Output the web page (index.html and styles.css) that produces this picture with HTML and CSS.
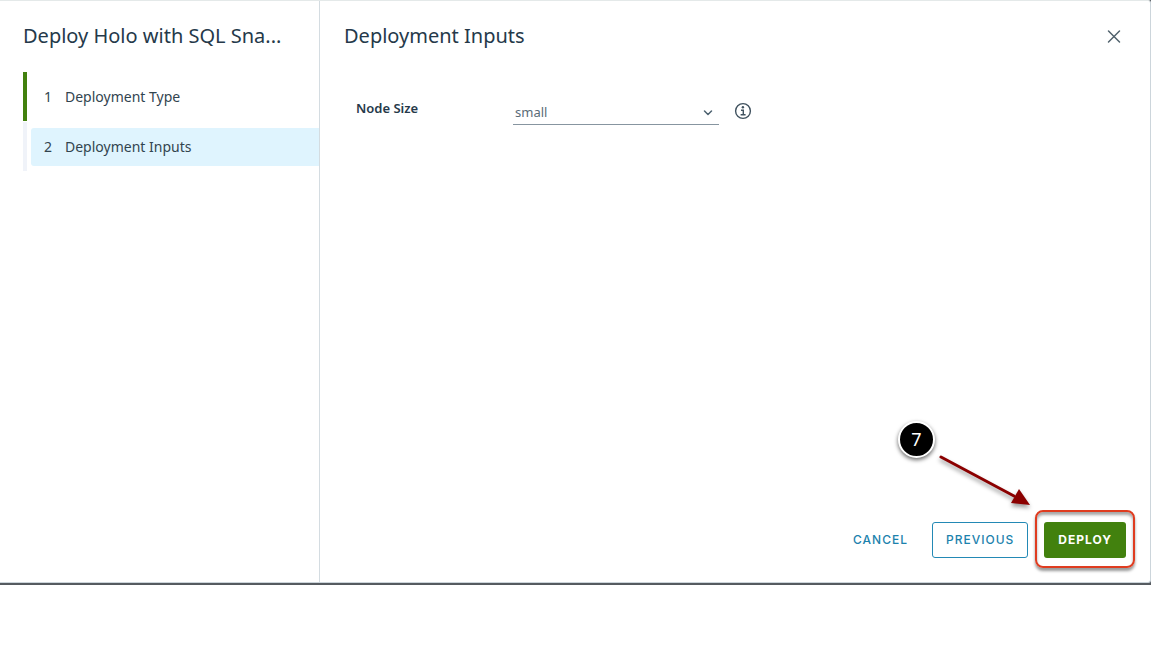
FILE: index.html
```html
<!DOCTYPE html>
<html lang="en">
<head>
<meta charset="utf-8">
<title>Deployment Inputs</title>
<meta name="viewport" content="width=device-width, initial-scale=1">
<link rel="stylesheet" href="styles.css">
</head>
<body>
<div class="backdrop">
  <div class="wizard" role="dialog" aria-labelledby="page-title">
    <aside class="sidebar">
      <h1 class="title">Deploy Holo with SQL Sna...</h1>
      <nav aria-label="Steps">
        <ol class="steps">
          <li class="step step-done"><button class="step-link" type="button"><span class="step-number">1</span>Deployment Type</button></li>
          <li class="step"><button class="step-link step-current" type="button" aria-current="step"><span class="step-number">2</span>Deployment Inputs</button></li>
        </ol>
      </nav>
    </aside>
    <main class="page">
      <header class="page-header">
        <h2 class="title" id="page-title">Deployment Inputs</h2>
        <button class="icon-button" type="button" aria-label="Close">
          <svg width="16" height="16" viewBox="0 0 16 16" fill="none" stroke="#51626d" stroke-width="1.5" stroke-linecap="round"><path d="M2.5 3l11 11M13.500 3l-11 11"/></svg>
        </button>
      </header>
      <form class="fields">
        <label class="field-label" for="node-size">Node Size</label>
        <div class="select-wrap">
          <select class="select" id="node-size"><option>small</option><option>medium</option><option>large</option></select>
          <svg class="caret" width="12" height="8" viewBox="0 0 12 8" fill="none" stroke="#4d6270" stroke-width="1.500" stroke-linecap="round" stroke-linejoin="round"><path d="M2.500 2L6 5.500 9.500 2"/></svg>
        </div>
        <button class="icon-button" type="button" aria-label="Node size information">
          <svg width="18" height="18" viewBox="0 0 18 18" fill="none" stroke="#40525f"><circle cx="9" cy="9" r="7.400" stroke-width="1.400"/><circle cx="8.900" cy="5.200" r="1.200" fill="#40525f" stroke="none"/><path d="M7 8.200h2.300v4.600M6.600 12.800h5" stroke-width="1.400"/></svg>
        </button>
      </form>
      <footer class="actions">
        <button class="button button-link" type="button">Cancel</button>
        <button class="button button-outline" type="button">Previous</button>
        <div class="highlight"><button class="button button-primary" type="button">Deploy</button></div>
        <div class="callout">7</div>
        <svg class="arrow" width="96" height="58" viewBox="0 0 96 58"><path d="M5 4L78 43" stroke="#8b0000" stroke-width="3" stroke-linecap="round"/><path d="M83 36L94 52 75 50Z" fill="#8b0000"/></svg>
      </footer>
    </main>
  </div>
</div>
</body>
</html>
```
FILE: styles.css
```css
* { box-sizing: border-box; }

body {
  margin: 0;
  background: #fff;
  color: #21333b;
  font-family: "Noto Sans", "Open Sans", sans-serif;
}

button, select { font: inherit; color: inherit; }
button { cursor: pointer; }
svg { display: block; }

.backdrop {
  margin-right: 14px;
  background: #565b60;
  padding-bottom: 2px;
}

.wizard {
  display: grid;
  grid-template-columns: 320px 1fr;
  min-height: calc(100vh - 63px);
  background: #fff;
  border: 1px solid #ccd5db;
  border-top-color: #e4e9e9;
  border-left: 0;
  border-radius: 0 3px 3px 0;
}

.sidebar {
  padding: 22px 0 0 23px;
  border-right: 1px solid #d4dce1;
}

.title {
  margin: 0;
  color: #25394a;
  font-size: 20px;
  line-height: 26px;
  font-weight: 400;
  white-space: nowrap;
}

.steps {
  display: grid;
  gap: 1px;
  margin: 23px 0 0;
  padding: 0;
  list-style: none;
}

.step {
  display: flex;
  align-items: center;
  height: 49px;
  padding-left: 4px;
  border-left: 4px solid #f0f3f9;
}

.step-done { border-left-color: #42810e; }

.step-link {
  display: flex;
  align-items: center;
  flex: 1;
  height: 38px;
  padding: 0 13px;
  border: 0;
  border-radius: 3px 0 0 3px;
  background: none;
  color: #32444f;
  font-size: 14px;
}

.step-current { background: #dff4fe; }
.step-number { width: 21px; text-align: left; }

.page {
  display: flex;
  flex-direction: column;
  padding: 22px 24px 24px;
}

.page-header {
  display: flex;
  justify-content: space-between;
  align-items: center;
  padding-right: 4px;
}

.icon-button {
  padding: 0;
  border: 0;
  background: none;
}

.fields {
  display: grid;
  grid-template-columns: 145px 206px auto;
  column-gap: 12px;
  justify-content: start;
  align-items: center;
  margin-top: 50px;
  padding-left: 12px;
}

.fields .icon-button { margin-left: 3px; padding-bottom: 2px; }

.field-label {
  padding-bottom: 8px;
  color: #25394a;
  font-size: 13px;
  line-height: 18px;
  font-weight: 600;
}

.select-wrap { position: relative; }

.select {
  display: block;
  width: 100%;
  height: 26px;
  padding: 0 24px 0 2px;
  border: 0;
  border-bottom: 1px solid #8795a0;
  border-radius: 0;
  background: none;
  color: #5a6c78;
  font-size: 13px;
  appearance: none;
}

.caret {
  position: absolute;
  right: 5px;
  top: 10px;
  pointer-events: none;
}

.actions {
  position: relative;
  display: flex;
  justify-content: flex-end;
  align-items: center;
  gap: 16px;
  margin-top: auto;
}

.button {
  height: 36px;
  padding: 0 13px 2px;
  border: 1px solid transparent;
  border-radius: 3px;
  background: none;
  font-family: Inter, sans-serif;
  font-size: 12px;
  font-weight: 500;
  letter-spacing: 1px;
  text-transform: uppercase;
}

.button-link { padding: 0 7px 2px; color: #1c82ad; }
.button-outline { border-color: #2389b5; color: #1c82ad; }
.button-primary { background: #42810e; color: #fff; font-weight: 700; }

/* Tutorial marks over the wizard */
.highlight {
  position: relative;
}

.highlight::after {
  content: "";
  position: absolute;
  inset: -12px -9px -10px;
  border: 2px solid #df3c20;
  border-radius: 8px;
  box-shadow: 0 3px 3px rgba(0, 0, 0, .4), inset 0 3px 3px rgba(0, 0, 0, .35);
  pointer-events: none;
}

.callout {
  position: absolute;
  right: 191px;
  bottom: 100px;
  width: 37px;
  height: 37px;
  border: 2px solid #fff;
  border-radius: 50%;
  background: #000;
  box-shadow: 0 2px 4px rgba(0, 0, 0, .6);
  color: #fff;
  font-size: 18px;
  line-height: 33px;
  text-align: center;
}

.arrow {
  position: absolute;
  right: 94px;
  bottom: 47px;
  filter: drop-shadow(0 3px 2px rgba(0, 0, 0, .4));
  pointer-events: none;
}
```
